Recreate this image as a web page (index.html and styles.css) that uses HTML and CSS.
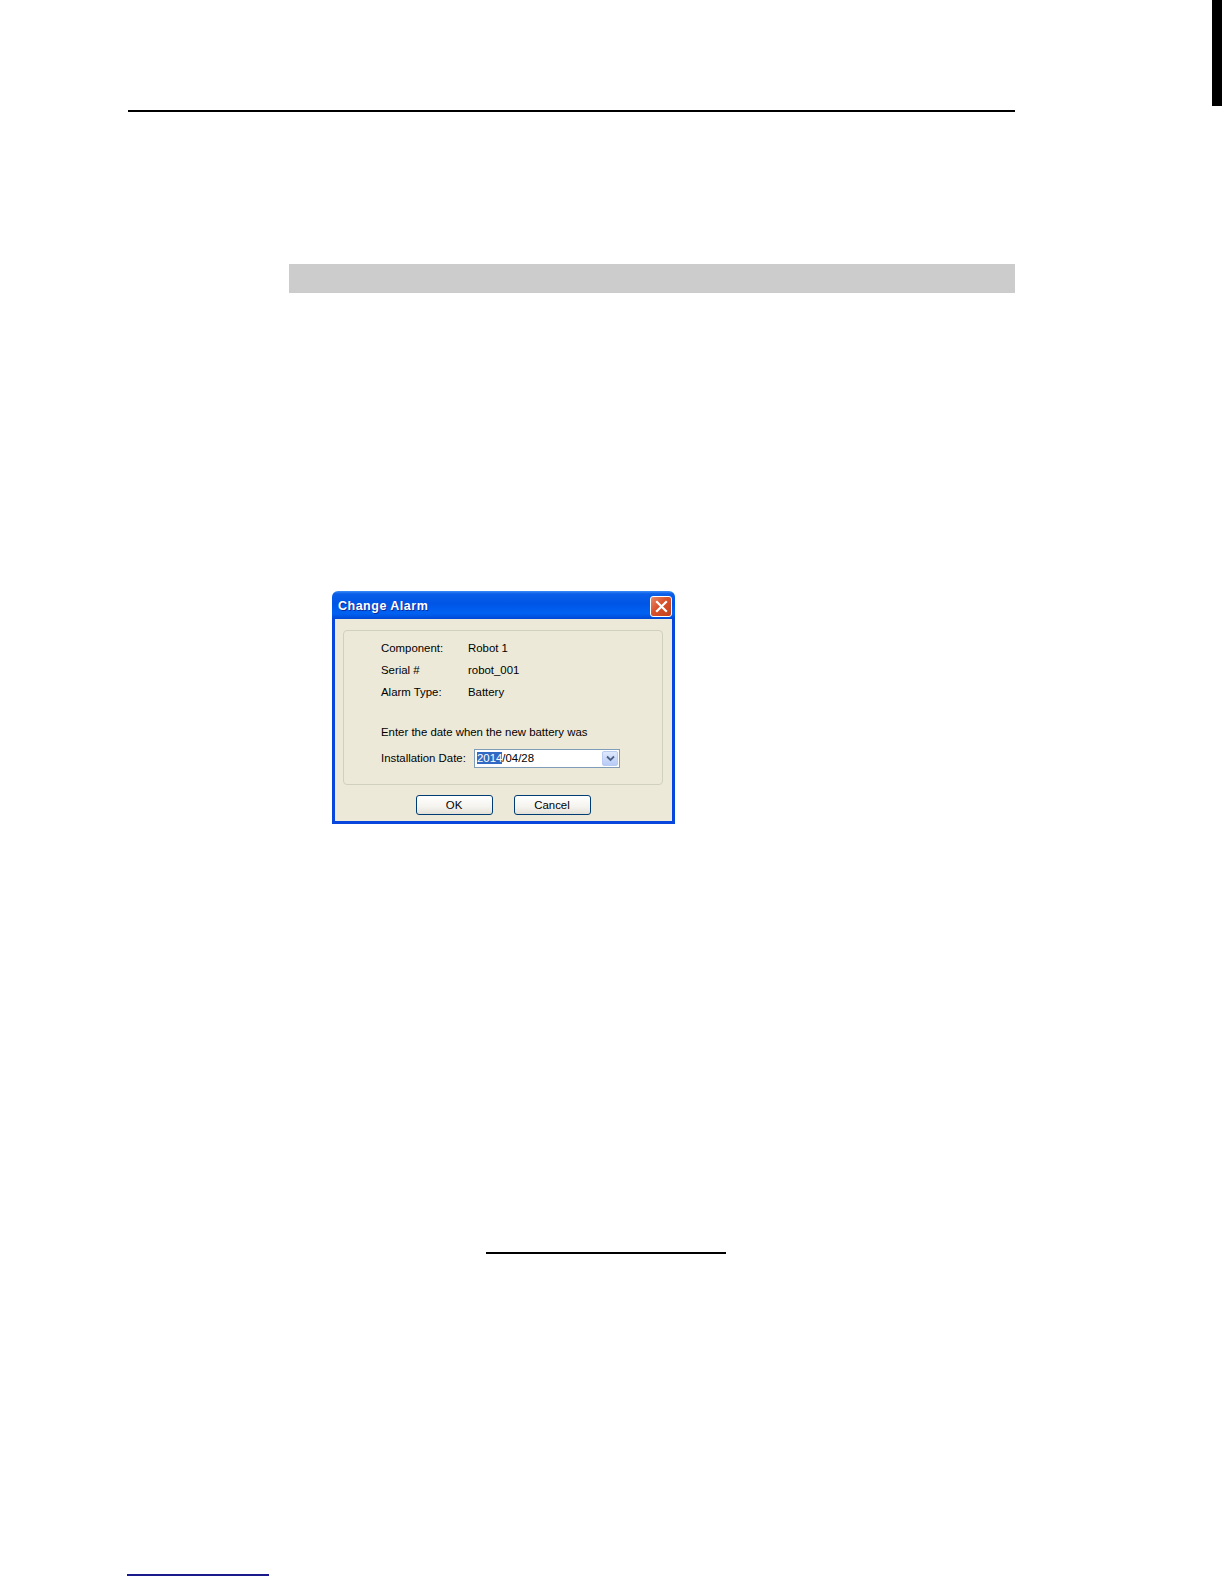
FILE: index.html
```html
<!DOCTYPE html>
<html>
<head>
<meta charset="utf-8">
<link rel="stylesheet" href="styles.css">
</head>
<body>
<div class="page">
  <div class="top"><div class="tab"></div></div>
  <div class="rule"></div>
  <div class="band"></div>
  <div class="dialog">
    <div class="titlebar">
      <span class="title">Change Alarm</span>
      <span class="close"><svg width="13" height="13" viewBox="0 0 13 13"><path d="M2 2 L11 11 M11 2 L2 11" stroke="#fff" stroke-width="2.2" stroke-linecap="square"/></svg></span>
    </div>
    <div class="body">
      <div class="group">
        <div class="row"><span class="lbl">Component:</span><span>Robot 1</span></div>
        <div class="row"><span class="lbl">Serial #</span><span>robot_001</span></div>
        <div class="row"><span class="lbl">Alarm Type:</span><span>Battery</span></div>
        <div class="row prompt">Enter the date when the new battery was</div>
        <div class="row inst">
          <span class="lbl2">Installation Date:</span>
          <div class="combo">
            <span class="val"><span class="sel">2014</span>/04/28</span>
            <span class="drop"><svg width="9" height="7" viewBox="0 0 9 7"><path d="M1 1.5 L4.5 5 L8 1.5" fill="none" stroke="#4d6185" stroke-width="1.8"/></svg></span>
          </div>
        </div>
      </div>
      <div class="buttons">
        <button class="btn">OK</button>
        <button class="btn">Cancel</button>
      </div>
    </div>
  </div>
  <div class="center-rule"></div>
  <div class="foot-rule"></div>
</div>
</body>
</html>
```
FILE: styles.css
```css
html, body {
  margin: 0;
  padding: 0;
  background: #ffffff;
}
.page {
  width: 1224px;
  height: 1584px;
  overflow: hidden;
  font-family: "Liberation Sans", Arial, sans-serif;
}
.top {
  height: 110px;
  display: flex;
  justify-content: flex-end;
}
.tab {
  width: 10px;
  height: 106px;
  background: #000;
  margin-right: 2px;
}
.rule {
  margin-left: 128px;
  width: 887px;
  height: 2px;
  background: #000;
}
.band {
  margin-top: 152px;
  margin-left: 289px;
  width: 726px;
  height: 29px;
  background: #cccccc;
}
.dialog {
  margin-top: 298px;
  margin-left: 332px;
  width: 343px;
  height: 233px;
  display: flex;
  flex-direction: column;
  box-sizing: border-box;
}
.titlebar {
  height: 28px;
  border-radius: 6px 6px 0 0;
  background: linear-gradient(to bottom, #3c8cf8 0%, #0a5ee8 10%, #0055e6 45%, #0062f2 80%, #0048d4 100%);
  display: flex;
  align-items: center;
  justify-content: space-between;
  padding: 0 3px 0 6px;
  box-sizing: border-box;
}
.title {
  color: #fff;
  font-weight: bold;
  font-size: 12.5px;
  letter-spacing: 0.5px;
  font-family: "Liberation Sans", Arial, sans-serif;
  text-shadow: 1px 1px 0 #0a2a9a;
  margin-top: 2px;
}
.close {
  width: 22px;
  height: 21px;
  box-sizing: border-box;
  border: 1px solid #fff;
  border-radius: 3px;
  background: linear-gradient(135deg, #e98a6a 0%, #d8512b 45%, #c2411c 100%);
  display: flex;
  align-items: center;
  justify-content: center;
  margin-top: 2px;
}
.body {
  flex: 1;
  background: #ece9d8;
  border: 3px solid #0846dc;
  border-top: none;
  padding: 11px 9px 0 8px;
  display: flex;
  flex-direction: column;
}
.group {
  height: 155px;
  box-sizing: border-box;
  border: 1px solid #d0d0bf;
  border-radius: 4px;
  padding: 6px 0 0 37px;
  font-size: 11.4px;
  color: #000;
}
.row {
  height: 22px;
  display: flex;
  align-items: center;
}
.lbl {
  width: 87px;
}
.prompt {
  margin-top: 18px;
}
.inst {
  margin-top: 5px;
  height: 20px;
}
.lbl2 {
  width: 93px;
}
.combo {
  width: 146px;
  height: 19px;
  box-sizing: border-box;
  border: 1px solid #7f9db9;
  background: #fff;
  display: flex;
  align-items: center;
  justify-content: space-between;
  padding: 0 1px 0 2px;
}
.val {
  font-size: 11.4px;
}
.sel {
  background: #316ac5;
  color: #fff;
}
.drop {
  width: 16px;
  height: 15px;
  box-sizing: border-box;
  border: 1px solid #b9cbf0;
  border-radius: 2px;
  background: linear-gradient(to bottom, #dfe8fd, #b7cbf6);
  display: flex;
  align-items: center;
  justify-content: center;
}
.buttons {
  margin-top: 10px;
  display: flex;
  justify-content: center;
  gap: 21px;
}
.btn {
  width: 77px;
  height: 20px;
  box-sizing: border-box;
  border: 1px solid #003c74;
  border-radius: 3px;
  background: linear-gradient(to bottom, #ffffff 0%, #f4f3ee 60%, #e3e1d6 100%);
  font-family: "Liberation Sans", Arial, sans-serif;
  font-size: 11.4px;
  color: #000;
  padding: 0;
}
.center-rule {
  margin-top: 428px;
  margin-left: 486px;
  width: 240px;
  height: 2px;
  background: #000;
}
.foot-rule {
  margin-top: 320px;
  margin-left: 127px;
  width: 142px;
  height: 2px;
  background: #1a1a8c;
}
```
